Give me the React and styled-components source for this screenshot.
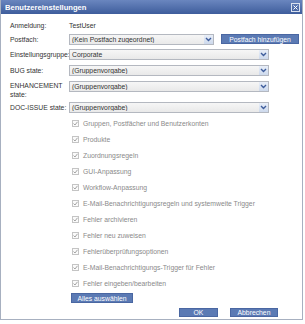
import React from "react";
import styled, { createGlobalStyle } from "styled-components";

const Global = createGlobalStyle`
  html, body { margin: 0; padding: 0; background: #ffffff; }
  body { font-family: "Liberation Sans", Arial, sans-serif; }
`;

const Dialog = styled.div`
  width: 303px;
  height: 320px;
  box-sizing: border-box;
  border: 1px solid #a7b0c0;
  border-top: none;
  background: #ffffff;
  display: flex;
  flex-direction: column;
  font-size: 6.8px;
  color: #222;
`;

const TitleBar = styled.div`
  height: 14px;
  background: linear-gradient(#6a86bf, #3e5d9c);
  display: flex;
  align-items: center;
  justify-content: space-between;
  padding: 0 2px 0 4px;
  color: #fff;
  font-weight: bold;
  font-size: 7.6px;
`;

const CloseBox = styled.div`
  width: 7px;
  height: 7px;
  border: 1px solid #d8e0ee;
  display: flex;
  align-items: center;
  justify-content: center;
`;

const Body = styled.div`
  display: flex;
  flex-direction: column;
  padding: 5px 0 0 9px;
`;

const Row = styled.div`
  display: flex;
  align-items: ${(p) => (p.$top ? "flex-start" : "center")};
  height: ${(p) => p.$h || 12}px;
  margin-top: ${(p) => p.$mt || 0}px;
`;

const Label = styled.div`
  width: 59px;
  flex: none;
  line-height: 9px;
  color: #333;
  white-space: ${(p) => (p.$wrap ? "normal" : "nowrap")};
  padding-top: ${(p) => (p.$wrap ? 1 : 0)}px;
`;

const Value = styled.div`
  color: #333;
`;

const Select = styled.div`
  width: ${(p) => p.$w}px;
  height: 11px;
  box-sizing: border-box;
  border: 1px solid #b4b8c0;
  background: linear-gradient(#f6f6f6, #e9e9e9);
  display: flex;
  align-items: center;
  margin-top: ${(p) => (p.$top ? 1 : 0)}px;
`;

const SelectText = styled.div`
  flex: 1;
  padding-left: 2px;
  color: #333;
  white-space: nowrap;
  overflow: hidden;
`;

const Arrow = styled.div`
  width: 9px;
  height: 9px;
  background: linear-gradient(#e8eef8, #cdd9ec);
  display: flex;
  align-items: center;
  justify-content: center;
`;

const BlueButton = styled.div`
  height: ${(p) => p.$h || 9}px;
  width: ${(p) => p.$w}px;
  background: #5b7ab4;
  border: 1px solid #4a67a2;
  box-sizing: border-box;
  color: #fff;
  display: flex;
  align-items: center;
  justify-content: center;
  margin-left: ${(p) => p.$ml || 0}px;
  white-space: nowrap;
`;

const Checks = styled.div`
  display: flex;
  flex-direction: column;
  padding-left: 62px;
  margin-top: 2px;
`;

const CheckRow = styled.div`
  display: flex;
  align-items: center;
  height: 16px;
  color: #8a8a8a;
`;

const Box = styled.div`
  width: 7px;
  height: 7px;
  box-sizing: border-box;
  border: 1px solid #c4c4c4;
  background: #fafafa;
  margin-right: 4px;
  display: flex;
  align-items: center;
  justify-content: center;
`;

const SelectAllWrap = styled.div`
  padding-left: 61px;
  margin-top: 2px;
`;

const Footer = styled.div`
  display: flex;
  justify-content: flex-end;
  width: 268px;
  margin-top: 5px;
  gap: 12px;
`;

const Chevron = () => (
  <svg width="7" height="5" viewBox="0 0 7 5">
    <path d="M1 1 L3.5 3.5 L6 1" stroke="#3e5d9c" strokeWidth="1.4" fill="none" />
  </svg>
);

const Tick = () => (
  <svg width="5" height="5" viewBox="0 0 5 5">
    <path d="M0.5 2.5 L2 4 L4.5 0.8" stroke="#9a9a9a" strokeWidth="0.9" fill="none" />
  </svg>
);

const Sel = ({ w, text, top }) => (
  <Select $w={w} $top={top}>
    <SelectText>{text}</SelectText>
    <Arrow>
      <Chevron />
    </Arrow>
  </Select>
);

const items = [
  "Gruppen, Postfächer und Benutzerkonten",
  "Produkte",
  "Zuordnungsregeln",
  "GUI-Anpassung",
  "Workflow-Anpassung",
  "E-Mail-Benachrichtigungsregeln und systemweite Trigger",
  "Fehler archivieren",
  "Fehler neu zuweisen",
  "Fehlerüberprüfungsoptionen",
  "E-Mail-Benachrichtigungs-Trigger für Fehler",
  "Fehler eingeben/bearbeiten",
];

export default function App() {
  return (
    <>
      <Global />
      <Dialog>
        <TitleBar>
          <span>Benutzereinstellungen</span>
          <CloseBox>
            <svg width="5" height="5" viewBox="0 0 5 5">
              <path d="M0.5 0.5 L4.5 4.5 M4.5 0.5 L0.5 4.5" stroke="#fff" strokeWidth="1" />
            </svg>
          </CloseBox>
        </TitleBar>
        <Body>
          <Row>
            <Label>Anmeldung:</Label>
            <Value>TestUser</Value>
          </Row>
          <Row $mt={2}>
            <Label>Postfach:</Label>
            <Sel w={145} text="(Kein Postfach zugeordnet)" />
            <BlueButton $w={78} $h={10} $ml={7}>Postfach hinzufügen</BlueButton>
          </Row>
          <Row $mt={3}>
            <Label>Einstellungsgruppe:</Label>
            <Sel w={200} text="Corporate" />
          </Row>
          <Row $mt={4}>
            <Label>BUG state:</Label>
            <Sel w={200} text="(Gruppenvorgabe)" />
          </Row>
          <Row $mt={4} $h={19} $top>
            <Label $wrap>ENHANCEMENT state:</Label>
            <Sel w={200} text="(Gruppenvorgabe)" top />
          </Row>
          <Row $mt={2}>
            <Label>DOC-ISSUE state:</Label>
            <Sel w={200} text="(Gruppenvorgabe)" />
          </Row>
          <Checks>
            {items.map((t) => (
              <CheckRow key={t}>
                <Box>
                  <Tick />
                </Box>
                {t}
              </CheckRow>
            ))}
          </Checks>
          <SelectAllWrap>
            <BlueButton $w={62} $h={10}>Alles auswählen</BlueButton>
          </SelectAllWrap>
          <Footer>
            <BlueButton $w={39}>OK</BlueButton>
            <BlueButton $w={48}>Abbrechen</BlueButton>
          </Footer>
        </Body>
      </Dialog>
    </>
  );
}
